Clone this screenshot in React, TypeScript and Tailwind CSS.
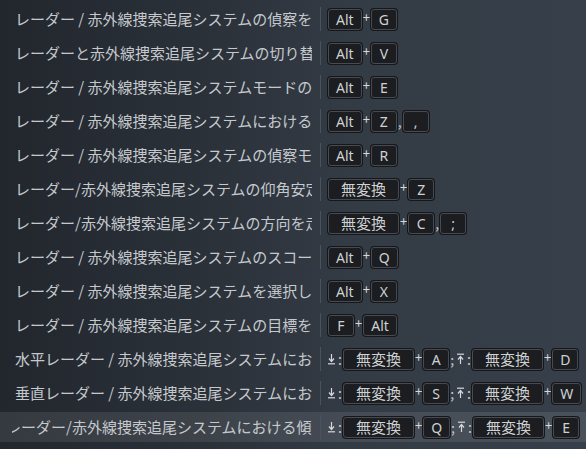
import React from "react";

type Part =
  | { k: string }
  | { t: string }
  | { down: true }
  | { up: true };

const Key = ({ label }: { label: string }) => {
  const wide = label === "無変換";
  return (
    <span
      className={
        "flex h-[21px] items-center justify-center rounded-[3px] border border-[#474b51] bg-[#1b1d20] text-[#cfd1d3] shadow-[0_0_0_1px_#15171a] " +
        (wide ? "px-[12px] text-[15px]" : "min-w-[26px] px-[7px] text-[14px]")
      }
      style={{ fontFamily: '"Noto Sans", "Noto Sans CJK JP", sans-serif' }}
    >
      {label}
    </span>
  );
};

const Down = () => (
  <svg width="9" height="12" viewBox="0 0 9 12" className="mx-[1px]">
    <path d="M4.5 1 V8" stroke="#d6d8da" strokeWidth="1.2" fill="none" />
    <path d="M2 5.5 L4.5 8.5 L7 5.5" stroke="#d6d8da" strokeWidth="1.2" fill="none" />
    <path d="M1 10.8 H8" stroke="#d6d8da" strokeWidth="1.2" />
  </svg>
);

const Up = () => (
  <svg width="9" height="12" viewBox="0 0 9 12" className="mx-[1px]">
    <path d="M1 1.2 H8" stroke="#d6d8da" strokeWidth="1.2" />
    <path d="M4.5 4 V11" stroke="#d6d8da" strokeWidth="1.2" fill="none" />
    <path d="M2 6.5 L4.5 3.5 L7 6.5" stroke="#d6d8da" strokeWidth="1.2" fill="none" />
  </svg>
);

const Plus = () => (
  <span className="mx-[1px] -mt-[4px] text-[13px] text-[#d6d8da]">+</span>
);

const Sep = ({ t }: { t: string }) => (
  <span className="mx-[1px] text-[14px] text-[#c6cace]">{t}</span>
);

const rows: { text: string; parts: Part[]; shift?: boolean; active?: boolean }[] = [
  { text: "レーダー / 赤外線捜索追尾システムの偵察を行う", parts: [{ k: "Alt" }, { k: "G" }] },
  { text: "レーダーと赤外線捜索追尾システムの切り替え", parts: [{ k: "Alt" }, { k: "V" }] },
  { text: "レーダー / 赤外線捜索追尾システムモードの切り替え", parts: [{ k: "Alt" }, { k: "E" }] },
  { text: "レーダー / 赤外線捜索追尾システムにおける目標の選択", parts: [{ k: "Alt" }, { k: "Z" }, { t: "," }, { k: "," }] },
  { text: "レーダー / 赤外線捜索追尾システムの偵察モードの切り替え", parts: [{ k: "Alt" }, { k: "R" }] },
  { text: "レーダー/赤外線捜索追尾システムの仰角安定化", parts: [{ k: "無変換" }, { k: "Z" }] },
  { text: "レーダー/赤外線捜索追尾システムの方向を走査", parts: [{ k: "無変換" }, { k: "C" }, { t: "," }, { k: ";" }] },
  { text: "レーダー / 赤外線捜索追尾システムのスコープ", parts: [{ k: "Alt" }, { k: "Q" }] },
  { text: "レーダー / 赤外線捜索追尾システムを選択した", parts: [{ k: "Alt" }, { k: "X" }] },
  { text: "レーダー / 赤外線捜索追尾システムの目標を追跡", parts: [{ k: "F" }, { k: "Alt" }] },
  {
    text: "水平レーダー / 赤外線捜索追尾システムにおける",
    parts: [{ down: true }, { t: ":" }, { k: "無変換" }, { k: "A" }, { t: ";" }, { up: true }, { t: ":" }, { k: "無変換" }, { k: "D" }],
  },
  {
    text: "垂直レーダー / 赤外線捜索追尾システムにおける",
    parts: [{ down: true }, { t: ":" }, { k: "無変換" }, { k: "S" }, { t: ";" }, { up: true }, { t: ":" }, { k: "無変換" }, { k: "W" }],
  },
  {
    text: "レーダー/赤外線捜索追尾システムにおける傾き",
    parts: [{ down: true }, { t: ":" }, { k: "無変換" }, { k: "Q" }, { t: ";" }, { up: true }, { t: ":" }, { k: "無変換" }, { k: "E" }],
    shift: true,
    active: true,
  },
];

const Keys = ({ parts }: { parts: Part[] }) => {
  const out: React.ReactNode[] = [];
  parts.forEach((p, i) => {
    const prev = parts[i - 1];
    if ("k" in p && prev && "k" in prev) out.push(<Plus key={"p" + i} />);
    if ("k" in p) out.push(<Key key={i} label={p.k} />);
    else if ("t" in p) out.push(<Sep key={i} t={p.t} />);
    else if ("down" in p) out.push(<Down key={i} />);
    else out.push(<Up key={i} />);
  });
  return <div className="flex items-center">{out}</div>;
};

export default function App() {
  return (
    <div
      className="h-[449px] w-[586px] overflow-hidden bg-[linear-gradient(90deg,#22272e_0%,#2b3139_35%,#333b45_60%,#37404a_100%)] pt-[4px]"
      style={{ fontFamily: '"Noto Sans CJK JP", "Noto Sans", sans-serif' }}
    >
      <div className="flex flex-col gap-[4px]">
        {rows.map((r, i) => {
          const arrows = r.parts.length > 0 && "down" in r.parts[0];
          return (
            <div
              key={i}
              className={"flex h-[30px] items-center " + (r.active ? "bg-white/[0.09]" : "")}
            >
              <div className="ml-[12px] w-[300px] overflow-hidden whitespace-nowrap text-[15px] leading-[30px] text-[#c5c9cd]">
                <span className={r.shift ? "-ml-[6px] inline-block" : "ml-[3px] inline-block"}>{r.text}</span>
              </div>
              <div className="ml-[8px] h-[24px] w-px bg-[#4a525c]" />
              <div className={arrows ? "ml-[5px]" : "ml-[7px]"}>
                <Keys parts={r.parts} />
              </div>
            </div>
          );
        })}
      </div>
    </div>
  );
}
